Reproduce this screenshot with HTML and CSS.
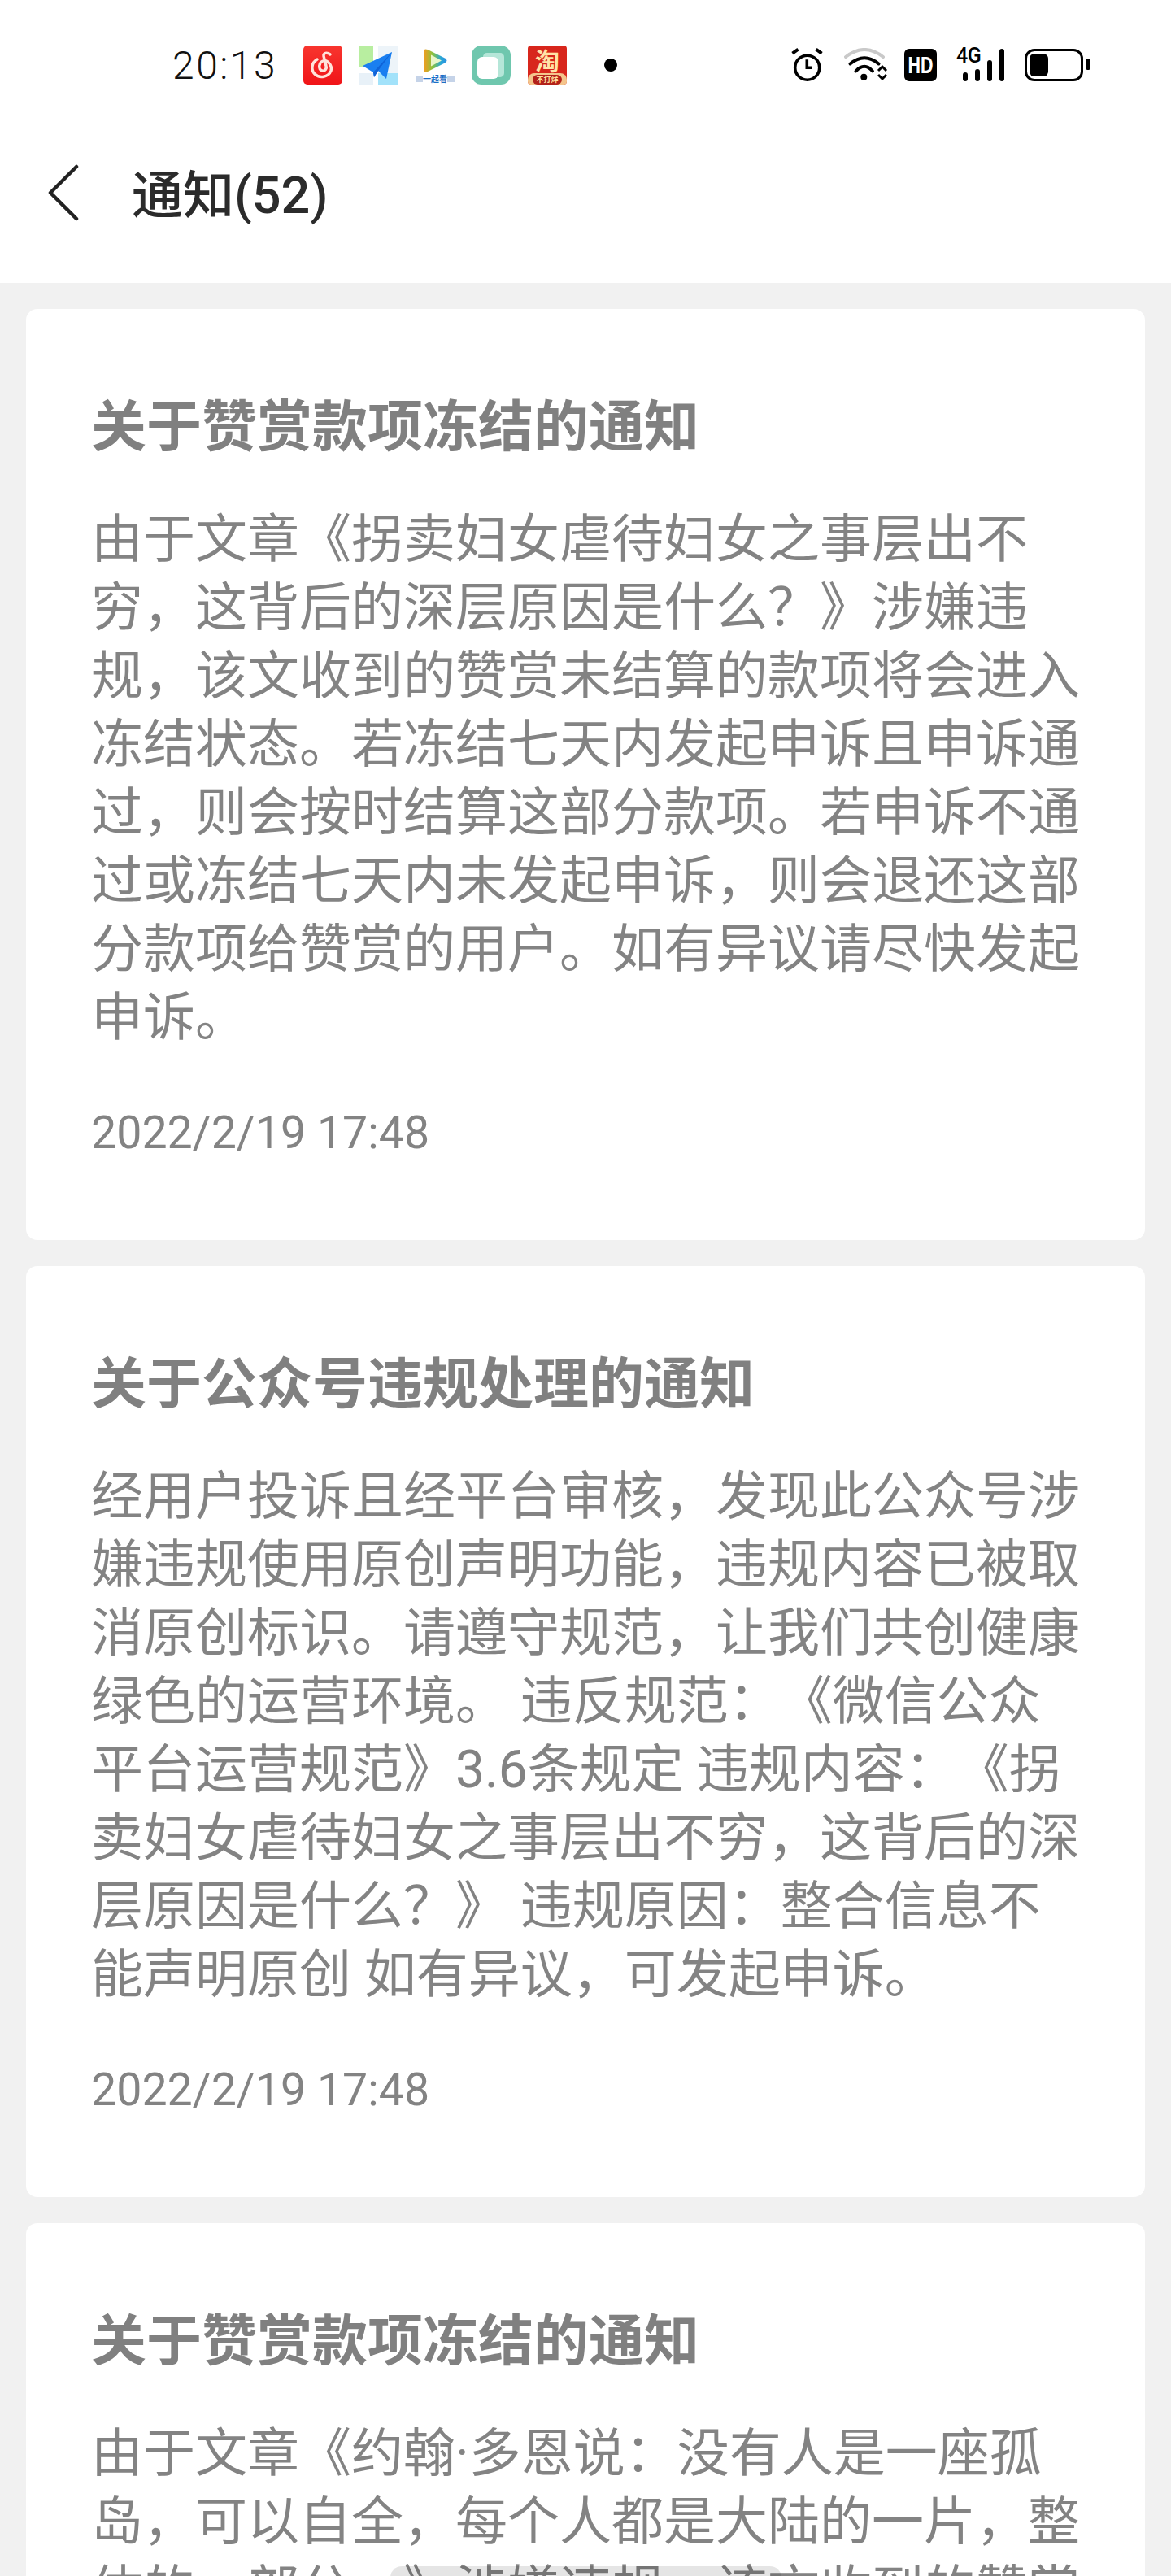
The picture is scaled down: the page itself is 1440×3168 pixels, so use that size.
FILE: index.html
```html
<!DOCTYPE html>
<html lang="zh-CN">
<head>
  <meta charset="UTF-8" />
  <title>通知</title>
  <link rel="stylesheet" href="styles.css">
</head>
<body>
  <header class="top">
    <div class="status-bar">
      <span class="time">20:13</span>
      <div class="app-icons">
        <svg class="app" viewBox="0 0 48 48">
          <defs><linearGradient id="red" x1="0" y1="0" x2="0" y2="1"><stop offset="0" stop-color="#f8352f"/><stop offset="1" stop-color="#f01418"/></linearGradient></defs>
          <rect width="48" height="48" rx="5" fill="url(#red)"/>
          <path d="M17 17C10 21 9 30 14 35C20 41 31 39 34 31C36 24 29 17 24 19C19 21 18 29 23 31C27 32 29 28 28 25L25 13C24.500 9 29 8 33 11" fill="none" stroke="#ffe3da" stroke-width="3.500" stroke-linecap="round"/>
        </svg>
        <svg class="app" viewBox="0 0 48 48">
          <rect width="48" height="48" fill="#fff"/>
          <rect width="17" height="26" fill="#b8eea0"/>
          <rect y="34" width="17" height="14" fill="#e8f1f8"/>
          <rect x="23" width="25" height="34" fill="#edf4f9"/>
          <rect x="23" y="34" width="25" height="14" fill="#a2e2fa"/>
          <path d="M40 8 4 25 17 33 18 39 23 31 33 41z" fill="#1a7ff0"/>
          <path d="M40 8 17 33 18 39 23 31z" fill="#0f63d8"/>
        </svg>
        <svg class="app" viewBox="0 0 48 48">
          <defs><linearGradient id="tv" x1="0" y1="0" x2="1" y2="0"><stop offset="0" stop-color="#f79a1e"/><stop offset="0.4" stop-color="#86c440"/><stop offset="0.75" stop-color="#2aa6d8"/><stop offset="1" stop-color="#2a8fe0"/></linearGradient></defs>
          <path d="M15 5 36 15.500Q41 18.500 36 21.500L15 32Q10 34 10 29V8Q10 3 15 5z" fill="url(#tv)"/>
          <path d="M19 11.500 32 18.500 19 25.500z" fill="#e9f6c8"/>
          <rect x="0" y="37" width="9" height="8" fill="#c5d3e8"/>
          <rect x="39" y="37" width="9" height="8" fill="#c5d3e8"/>
          <text x="24" y="44.500" text-anchor="middle" class="tv-label">一起看</text>
        </svg>
        <svg class="app" viewBox="0 0 48 48">
          <rect width="48" height="48" rx="12" fill="#6fc7ae"/>
          <rect x="14" y="9" width="26" height="30" rx="5" fill="#b5e6d8"/>
          <rect x="7" y="14" width="26" height="27" rx="6" fill="#fff"/>
        </svg>
        <div class="app tao">
          <span class="tao-main">淘</span>
          <div class="tao-band"><span>不打烊</span></div>
        </div>
      </div>
      <span class="dot"></span>
      <div class="sys-icons">
        <svg class="alarm" viewBox="0 0 40 42">
          <circle cx="19.700" cy="24.200" r="15" fill="none" stroke="#000" stroke-width="3.600"/>
          <path d="M19.300 14.300v10h6" fill="none" stroke="#000" stroke-width="3.600"/>
          <path d="M1.500 6.700l7-5M37.500 6.700l-7-5" stroke="#000" stroke-width="4"/>
        </svg>
        <svg class="wifi" viewBox="0 0 54 42">
          <path d="M2 11Q25 -7 48 11" fill="none" stroke="#c9c9c9" stroke-width="4" stroke-linecap="round"/>
          <path d="M7.500 19.500Q25 5 42.500 19.500M14.500 28.500Q25 17 35 28.500" fill="none" stroke="#000" stroke-width="4" stroke-linecap="round"/>
          <circle cx="24.300" cy="35.700" r="4" fill="#000"/>
          <path d="M42 28l5-5 5 5M42 33l5 5 5-5" fill="none" stroke="#000" stroke-width="3"/>
        </svg>
        <div class="hd"><span>HD</span></div>
        <div class="signal">
          <span class="net">4G</span>
          <i class="b1"></i><i class="b2"></i><i class="b3"></i><i class="b4"></i>
        </div>
        <div class="battery"><div class="level"></div></div>
      </div>
    </div>
    <div class="nav">
      <svg class="back" viewBox="0 0 40 72"><path d="M36 3 4 35l32 32" fill="none" stroke="#222" stroke-width="4.500" stroke-linecap="round" stroke-linejoin="round"/></svg>
      <h1>通知(52)</h1>
    </div>
  </header>

  <main class="list">
    <section class="card">
      <h2>关于赞赏款项冻结的通知</h2>
      <p class="body">由于文章《拐卖妇女虐待妇女之事层出不穷，这背后的深层原因是什么？》涉嫌违规，该文收到的赞赏未结算的款项将会进入冻结状态。若冻结七天内发起申诉且申诉通过，则会按时结算这部分款项。若申诉不通过或冻结七天内未发起申诉，则会退还这部分款项给赞赏的用户。如有异议请尽快发起申诉。</p>
      <p class="date">2022/2/19 17:48</p>
    </section>
    <section class="card">
      <h2>关于公众号违规处理的通知</h2>
      <p class="body">经用户投诉且经平台审核，发现此公众号涉嫌违规使用原创声明功能，违规内容已被取消原创标识。请遵守规范，让我们共创健康绿色的运营环境。 违反规范：《微信公众平台运营规范》3.6条规定 违规内容：《拐卖妇女虐待妇女之事层出不穷，这背后的深层原因是什么？》 违规原因：整合信息不能声明原创 如有异议，可发起申诉。</p>
      <p class="date">2022/2/19 17:48</p>
    </section>
    <section class="card">
      <h2>关于赞赏款项冻结的通知</h2>
      <p class="body">由于文章《约翰·多恩说：没有人是一座孤岛，可以自全，每个人都是大陆的一片，整体的一部分。》涉嫌违规，该文收到的赞赏未结算的款项将会进入冻结状态。</p>
    </section>
  </main>
  <div class="toast"></div>
</body>
</html>
```
FILE: styles.css
```css
* {
  box-sizing: border-box;
}

html, body {
  margin: 0;
  height: 3168px;
  overflow: hidden;
}

body {
  position: relative;
  background: #f1f1f1;
  font-family: Roboto, "Noto Sans CJK SC", sans-serif;
  text-spacing-trim: space-all;
}

.top {
  background: #fff;
  height: 348px;
}

.status-bar {
  display: flex;
  align-items: center;
  height: 160px;
  padding-left: 212px;
  padding-right: 108px;
}

.time {
  width: 161px;
  font-size: 48px;
  font-weight: 300;
  letter-spacing: 2.500px;
  color: #111;
}

.app-icons {
  display: flex;
  gap: 21px;
}

.app {
  display: block;
  width: 48px;
  height: 48px;
}

.tv-label {
  font: 700 10px "Noto Sans CJK SC", sans-serif;
  fill: #1c6fc6;
}

.tao {
  display: flex;
  flex-direction: column;
  background: #d8261c;
  border-radius: 4px;
  overflow: hidden;
  text-align: center;
}

.tao-main {
  height: 34px;
  font: 700 30px/34px "Noto Sans CJK SC", sans-serif;
  color: #ffe3a8;
}

.tao-band {
  height: 14px;
  background: #f4c58c;
  border-radius: 8px 8px 0 0;
}

.tao-band span {
  display: block;
  margin: 2px 6px 0;
  border-radius: 6px;
  background: #b3211a;
  color: #ffdf9e;
  font: 700 9px/12px "Noto Sans CJK SC", sans-serif;
}

.dot {
  width: 16px;
  height: 16px;
  margin-left: 46px;
  border-radius: 50%;
  background: #000;
}

.sys-icons {
  display: flex;
  align-items: center;
  margin-left: auto;
  height: 42px;
}

.alarm {
  width: 40px;
  height: 42px;
}

.wifi {
  width: 54px;
  height: 42px;
  margin-left: 25px;
}

.hd {
  width: 40px;
  height: 40px;
  margin-left: 20px;
  background: #000;
  border-radius: 6px;
  color: #fff;
  font: 700 29px/40px "Liberation Sans", sans-serif;
  text-align: center;
}

.hd span {
  display: block;
  transform: scaleX(0.74);
  white-space: nowrap;
  margin: 0 -6px;
}

.signal {
  position: relative;
  display: flex;
  align-items: flex-end;
  gap: 8.500px;
  width: 59px;
  height: 40px;
  margin-left: 24px;
  padding-left: 8px;
}

.signal i {
  width: 6.500px;
  background: #000;
  border-radius: 3px;
}

.b1 { height: 11px; }
.b2 { height: 15px; }
.b3 { height: 26px; }
.b4 { height: 40px; }

.net {
  position: absolute;
  left: 0;
  top: -3px;
  font: 500 25px/24px Roboto, sans-serif;
  letter-spacing: -0.500px;
  color: #000;
}

.battery {
  position: relative;
  width: 72px;
  height: 40px;
  margin-left: 25px;
  padding: 3px;
  border: 3.500px solid #000;
  border-radius: 12px;
}

.battery::after {
  content: "";
  position: absolute;
  top: 9px;
  right: -11px;
  width: 4px;
  height: 14px;
  background: #000;
  border-radius: 1px;
}

.level {
  width: 23px;
  height: 100%;
  background: #000;
  border-radius: 6px;
}

.nav {
  display: flex;
  align-items: center;
  height: 156px;
  padding-left: 58px;
}

.back {
  width: 40px;
  height: 72px;
}

.nav h1 {
  margin: 0 0 8px 64px;
  font-size: 63px;
  font-weight: 500;
  color: #2b2b2b;
}

.list {
  display: flex;
  flex-direction: column;
  gap: 32px;
  padding: 32px 32px 0;
}

.card {
  flex: none;
  height: 1145px;
  padding: 72px 80px 0;
  background: #fff;
  border-radius: 14px;
}

.card h2 {
  margin: 32px 0 0;
  font-size: 68px;
  line-height: 84px;
  font-weight: 700;
  color: #808080;
}

.body {
  margin: 54px 0 0;
  font-size: 64px;
  line-height: 84px;
  color: #838383;
}

.date {
  margin: 58px 0 0;
  font-size: 55.500px;
  line-height: 84px;
  color: #838383;
}

.toast {
  position: absolute;
  left: 480px;
  top: 3156px;
  width: 481px;
  height: 40px;
  background: rgba(0, 0, 0, 0.1);
  border-radius: 14px;
}
```
